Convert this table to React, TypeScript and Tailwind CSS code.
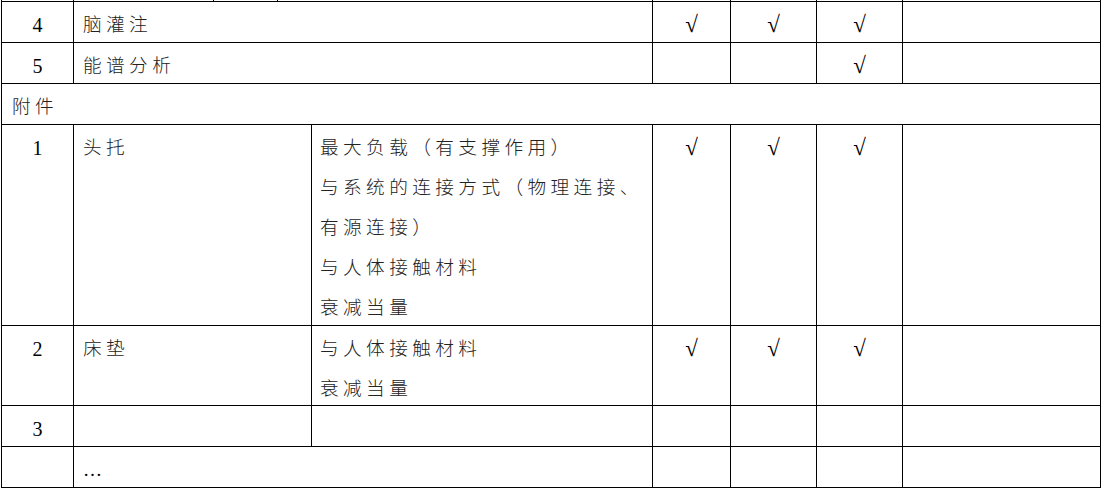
import React from "react";

const font = { fontFamily: '"Liberation Serif", "Noto Sans CJK SC", serif' };

type Row = {
  no: string;
  name: string;
  detail?: string[];
  span?: boolean;
  checks: [boolean, boolean, boolean];
  h: string;
};

const before: Row[] = [
  { no: "4", name: "脑灌注", span: true, checks: [true, true, true], h: "h-[41px]" },
  { no: "5", name: "能谱分析", span: true, checks: [false, false, true], h: "h-[41px]" },
];

const after: Row[] = [
  {
    no: "1",
    name: "头托",
    detail: ["最大负载（有支撑作用）", "与系统的连接方式（物理连接、", "有源连接）", "与人体接触材料", "衰减当量"],
    checks: [true, true, true],
    h: "h-[201px]",
  },
  { no: "2", name: "床垫", detail: ["与人体接触材料", "衰减当量"], checks: [true, true, true], h: "h-[80px]" },
  { no: "3", name: "", detail: [], checks: [false, false, false], h: "h-[41px]" },
];

const cell = "border-r border-b border-black pt-[3px] leading-[40px]";
const cjk = "font-light text-[18.67px] tracking-[4.4px] text-[#222]";

function Check({ on, h }: { on: boolean; h: string }) {
  return (
    <div className={`${cell} ${h} text-center text-[23px] font-light text-black`}>{on ? "√" : ""}</div>
  );
}

function TableRow({ r }: { r: Row }) {
  return (
    <>
      <div className={`${cell} ${r.h} text-center text-[20px] text-black`}>{r.no}</div>
      {r.span ? (
        <div className={`${cell} ${r.h} col-span-2 pl-[9px] ${cjk}`}>{r.name}</div>
      ) : (
        <>
          <div className={`${cell} ${r.h} pl-[9px] ${cjk}`}>{r.name}</div>
          <div className={`${cell} ${r.h} pl-[8px] ${cjk}`}>
            {r.detail?.map((d, i) => (
              <div key={i}>{d}</div>
            ))}
          </div>
        </>
      )}
      {r.checks.map((c, i) => (
        <Check key={i} on={c} h={r.h} />
      ))}
      <div className={`${cell} ${r.h}`} />
    </>
  );
}

export default function App() {
  return (
    <div className="w-[1102px] h-[489px] bg-white overflow-hidden" style={font}>
      {/* stub of the row above */}
      <div className="ml-[1px] grid h-[1px] grid-cols-[72px_140px_64px_375px_78px_86px_86px_198px] border-l border-black">
        {Array.from({ length: 8 }).map((_, i) => (
          <div key={i} className="border-r border-black" />
        ))}
      </div>
      <div className="ml-[1px] grid w-[1100px] grid-cols-[72px_238px_341px_78px_86px_86px_198px] border-l border-t border-black">
        {before.map((r) => (
          <TableRow key={r.no} r={r} />
        ))}
        <div className={`${cell} h-[41px] col-span-7 pl-[10px] ${cjk}`}>附件</div>
        {after.map((r) => (
          <TableRow key={r.no} r={r} />
        ))}
        <div className={`${cell} h-[41px]`} />
        <div className={`${cell} h-[41px] col-span-2 pl-[9px] text-[19px] text-black`}>…</div>
        <div className={`${cell} h-[41px]`} />
        <div className={`${cell} h-[41px]`} />
        <div className={`${cell} h-[41px]`} />
        <div className={`${cell} h-[41px]`} />
      </div>
    </div>
  );
}
